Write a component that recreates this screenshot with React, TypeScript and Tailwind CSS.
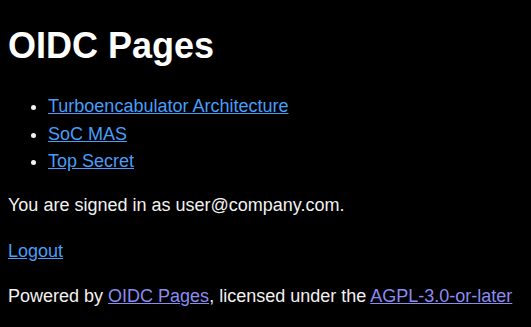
const links = ['Turboencabulator Architecture', 'SoC MAS', 'Top Secret'];

export default function App() {
  return (
    <div className="min-h-screen bg-black px-2 pt-[24px] pb-4 text-[18px] leading-[27.5px] text-[#f2f2f2] font-['Liberation_Sans',Arial,sans-serif]">
      <h1 className="text-[36px] font-bold leading-[43.2px] text-white">OIDC Pages</h1>

      <ul className="mt-[26px] list-disc pl-10">
        {links.map((name) => (
          <li key={name}>
            <a href="#" className="text-[#4a9df8] underline">
              {name}
            </a>
          </li>
        ))}
      </ul>

      <p className="mt-[16.5px]">You are signed in as user@company.com.</p>

      <p className="mt-[18px]">
        <a href="#" className="text-[#4a9df8] underline">
          Logout
        </a>
      </p>

      <p className="mt-[18px]">
        Powered by{' '}
        <a href="#" className="text-[#8b8bf0] underline">
          OIDC Pages
        </a>
        , licensed under the{' '}
        <a href="#" className="text-[#8b8bf0] underline">
          AGPL-3.0-or-later
        </a>
      </p>
    </div>
  );
}
